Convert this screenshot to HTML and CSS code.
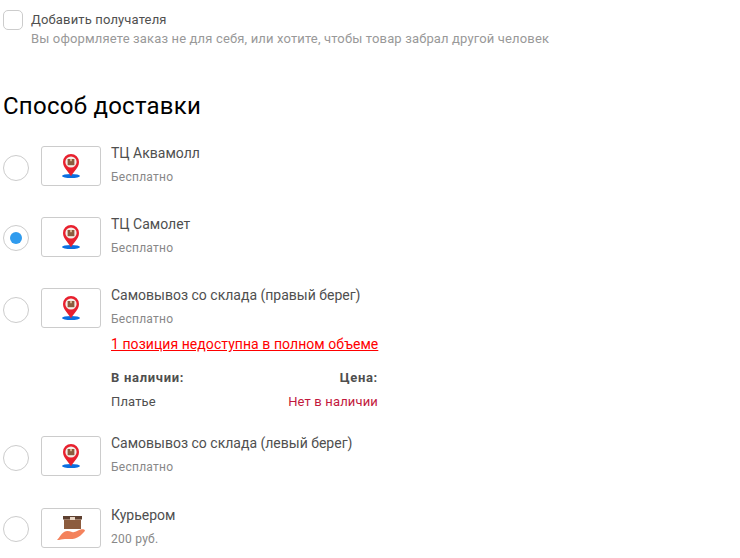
FILE: index.html
```html
<!DOCTYPE html>
<html lang="en">
<head>
    <meta charset="UTF-8">
    <meta name="viewport" content="width=device-width, initial-scale=1.0">
    <title>Способ доставки</title>
    <link rel="stylesheet" href="styles.css">
</head>
<body>

    <svg class="defs">
        <defs>
            <symbol id="pin" viewBox="0 0 18 24">
                <ellipse cx="9" cy="22" rx="9" ry="2" fill="#0b6fe0"/>
                <path d="M9 22.500C7 18 1 14 1 8a8 8 0 0 1 16 0c0 6-6 10-8 14.500z" fill="#e8202e"/>
                <circle cx="9" cy="8" r="5.600" fill="#f5efe9"/>
                <rect x="5.600" y="5" width="6.800" height="6.200" fill="#8c5c3e"/>
                <rect x="8.100" y="5" width="1.800" height="2.200" fill="#dcb896"/>
            </symbol>
            <symbol id="parcel" viewBox="0 0 28 24">
                <path d="M6 0h19v3.500H6z" fill="#5e4030"/>
                <path d="M7 3.500h17V13H7z" fill="#8c5c3e"/>
                <rect x="13" y="1" width="5" height="3" fill="#e8d5c3"/>
                <path d="M0 24c2-2 4-6 7-8 2.500-1.500 5-1 8 0 2 .5 3 0 5-1 3-1.500 5-2 7-1.500 1.500.5 1 1.500 0 2.500-2 2-5 5.500-9 6.500-4 1-7 .2-10 .5-3 .3-5 1-8 1z" fill="#f4825c"/>
            </symbol>
        </defs>
    </svg>

    <div class="recipient">
        <span class="checkbox"></span>
        <div class="recipient-text">
            <div class="recipient-title">Добавить получателя</div>
            <div class="recipient-hint">Вы оформляете заказ не для себя, или хотите, чтобы товар забрал другой человек</div>
        </div>
    </div>

    <h2>Способ доставки</h2>

    <div class="delivery">
        <span class="radio"></span>
        <span class="thumb"><svg class="icon-pin"><use href="#pin"/></svg></span>
        <div class="info">
            <div class="name">ТЦ Аквамолл</div>
            <div class="price">Бесплатно</div>
        </div>
    </div>

    <div class="delivery">
        <span class="radio checked"></span>
        <span class="thumb"><svg class="icon-pin"><use href="#pin"/></svg></span>
        <div class="info">
            <div class="name">ТЦ Самолет</div>
            <div class="price">Бесплатно</div>
        </div>
    </div>

    <div class="delivery">
        <span class="radio"></span>
        <span class="thumb"><svg class="icon-pin"><use href="#pin"/></svg></span>
        <div class="info">
            <div class="name">Самовывоз со склада (правый берег)</div>
            <div class="price">Бесплатно</div>
            <a class="warning" href="#">1 позиция недоступна в полном объеме</a>
            <div class="stock-row stock-head">
                <span>В наличии:</span>
                <span>Цена:</span>
            </div>
            <div class="stock-row stock-item">
                <span>Платье</span>
                <span class="missing">Нет в наличии</span>
            </div>
        </div>
    </div>

    <div class="delivery delivery-wide">
        <span class="radio"></span>
        <span class="thumb"><svg class="icon-pin"><use href="#pin"/></svg></span>
        <div class="info">
            <div class="name">Самовывоз со склада (левый берег)</div>
            <div class="price">Бесплатно</div>
        </div>
    </div>

    <div class="delivery">
        <span class="radio radio-high"></span>
        <span class="thumb"><svg class="icon-parcel"><use href="#parcel"/></svg></span>
        <div class="info">
            <div class="name">Курьером</div>
            <div class="price">200 руб.</div>
        </div>
    </div>

</body>
</html>
```

FILE: styles.css
```css
* {
    margin: 0;
    padding: 0;
    box-sizing: border-box;
}

body {
    font-family: 'Roboto', 'Liberation Sans', sans-serif;
    background-color: white;
    color: #4f4f4f;
    padding: 10px 3px 0;
    height: 558px;
    overflow: hidden;
}

.defs {
    display: none;
}

/* Recipient checkbox */
.recipient {
    display: flex;
    gap: 8px;
}

.checkbox {
    width: 20px;
    height: 20px;
    border: 1px solid #ccc;
    border-radius: 5px;
    flex-shrink: 0;
}

.recipient-text {
    padding-top: 1px;
}

.recipient-title {
    font-size: 13px;
    line-height: 18px;
    letter-spacing: 0.15px;
}

.recipient-hint {
    font-size: 13px;
    line-height: 18px;
    margin-top: 1px;
    color: #999;
    letter-spacing: 0.15px;
}

h2 {
    font-size: 24px;
    font-weight: 400;
    line-height: 30px;
    margin-top: 43px;
    margin-bottom: 25px;
    color: #000;
    letter-spacing: 0.25px;
}

/* Delivery options */
.delivery {
    display: flex;
    margin-bottom: 20px;
    min-height: 51px;
}

.delivery-wide {
    margin-bottom: 21px;
}

.radio {
    width: 26px;
    height: 26px;
    border: 1px solid #ccc;
    border-radius: 50%;
    margin-top: 9px;
    margin-right: 12px;
    flex-shrink: 0;
    display: flex;
    align-items: center;
    justify-content: center;
}

.radio.checked,
.radio.radio-high {
    margin-top: 8px;
}

.radio.checked::after {
    content: "";
    width: 12px;
    height: 12px;
    border-radius: 50%;
    background-color: #2f9bee;
}

.thumb {
    width: 60px;
    height: 40px;
    border: 1px solid #ccc;
    border-radius: 3px;
    flex-shrink: 0;
    margin-right: 10px;
    display: flex;
    align-items: center;
    justify-content: center;
}

.icon-pin {
    width: 18px;
    height: 24px;
}

.icon-parcel {
    width: 28px;
    height: 24px;
}

.info {
    width: 267px;
    margin-top: -1px;
}

.name {
    font-size: 14px;
    line-height: 16px;
}

.price {
    font-size: 12px;
    line-height: 14px;
    margin-top: 9px;
    color: #888;
    letter-spacing: 0.25px;
}

.warning {
    display: block;
    font-size: 14px;
    line-height: 16px;
    margin-top: 10px;
    color: red;
    text-decoration: underline;
    white-space: nowrap;
    letter-spacing: 0.06px;
}

.stock-row {
    display: flex;
    justify-content: space-between;
    font-size: 13px;
    line-height: 16px;
    margin-top: 8px;
    letter-spacing: 0.15px;
}

.stock-head {
    font-weight: 700;
    margin-top: 18px;
    letter-spacing: 0.7px;
}

.stock-item {
    margin-bottom: 6px;
}

.missing {
    color: #c2183c;
}
```
